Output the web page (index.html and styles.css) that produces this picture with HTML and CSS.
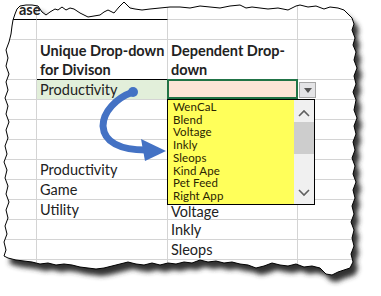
FILE: index.html
```html
<!DOCTYPE html>
<html lang="en">
<head>
  <meta charset="UTF-8" />
  <title>Dependent Drop-down</title>
  <link rel="stylesheet" href="styles.css">
</head>
<body>
  <div class="shot">
    <svg class="backdrop" width="381" height="296">
      <defs>
        <polygon id="tear-shape" points="13,20 15,14 17,9 20,6 26,5 32,5 38,6 42,12 46,15 50,12 55,9 58,10 62,7 66,10 70,8 74,9 80,13 88,17 94,16 100,15 104,12 108,10 114,13 119,7 124,2 127,5 130,8 135,9 142,10 150,9 160,8 170,7 180,7 190,8 200,6 210,7 220,8 230,6 240,5 246,8 252,7 260,8 268,9 278,8 288,10 296,6 300,5 308,7 316,6 324,9 330,7 338,8 344,10 348,14 352,18 354,24 352,30 355,38 353,45 356,52 354,60 357,68 354,76 356,84 353,92 356,100 354,110 357,118 354,126 356,134 353,142 355,150 352,158 355,166 353,174 356,182 353,190 355,198 352,206 354,214 351,222 354,230 352,238 354,246 351,254 353,262 350,268 344,270 338,272 332,275 326,274 320,268 312,266 304,267 296,264 288,266 280,265 272,263 264,266 256,268 248,265 240,264 232,262 224,263 216,261 208,262 200,260 192,263 184,262 176,264 168,263 160,265 152,263 144,265 136,264 128,262 120,264 112,266 104,268 96,269 88,268 80,267 72,265 64,264 56,265 48,263 40,264 32,262 24,261 16,260 8,258 4,256 6,250 4,242 7,234 5,226 8,218 6,210 9,202 6,194 8,186 5,178 7,170 4,162 7,154 5,146 8,138 6,130 9,122 6,114 8,106 5,98 8,90 6,82 9,74 6,66 8,58 6,50 9,42 11,34 12,26"/>
        <clipPath id="tear"><use href="#tear-shape"/></clipPath>
        <filter id="soft" x="-10%" y="-10%" width="120%" height="120%"><feGaussianBlur stdDeviation="2.5"/></filter>
      </defs>
      <use href="#tear-shape" class="shade" transform="translate(5,7)" filter="url(#soft)"/>
    </svg>

    <div class="sheet">
      <div class="grid">
        <div class="cell dark-bottom"><span class="title">ase</span></div>
        <div class="cell dark-bottom"></div>
        <div class="cell"></div>
        <div class="cell"></div>

        <div class="cell"></div><div class="cell"></div><div class="cell"></div><div class="cell"></div>

        <div class="cell"></div>
        <div class="cell head dark-bottom">Unique Drop-down<br>for Divison</div>
        <div class="cell head">Dependent Drop-<br>down</div>
        <div class="cell"></div>

        <div class="cell"></div>
        <div class="cell pick">Productivity</div>
        <div class="cell sel"></div>
        <div class="cell btn-cell"><div class="drop-btn"><svg width="8" height="5" viewBox="0 0 8 5"><path d="M0,0 H8 L4,5 Z" fill="#555"/></svg></div></div>

        <div class="cell"></div><div class="cell"></div><div class="cell"></div><div class="cell"></div>
        <div class="cell"></div><div class="cell"></div><div class="cell"></div><div class="cell"></div>
        <div class="cell"></div><div class="cell"></div><div class="cell"></div><div class="cell"></div>

        <div class="cell"></div><div class="cell">Productivity</div><div class="cell"></div><div class="cell"></div>
        <div class="cell"></div><div class="cell">Game</div><div class="cell"></div><div class="cell"></div>
        <div class="cell"></div><div class="cell">Utility</div><div class="cell low">Voltage</div><div class="cell"></div>
        <div class="cell"></div><div class="cell"></div><div class="cell">Inkly</div><div class="cell"></div>
        <div class="cell"></div><div class="cell"></div><div class="cell">Sleops</div><div class="cell"></div>
        <div class="cell"></div><div class="cell"></div><div class="cell">Kind Ape</div><div class="cell"></div>
      </div>

      <svg class="pointer" width="381" height="296">
        <path d="M133,92 C116,98 103,112 103,126 C104,142 120,150 146,150" fill="none" stroke="#4472c4" stroke-width="7"/>
        <circle cx="133" cy="92" r="5" fill="#4472c4"/>
        <polygon points="141,139 166,151 145,161" fill="#4472c4"/>
      </svg>

      <div class="list">
        <ul class="items">
          <li>WenCaL</li>
          <li>Blend</li>
          <li>Voltage</li>
          <li>Inkly</li>
          <li>Sleops</li>
          <li>Kind Ape</li>
          <li>Pet Feed</li>
          <li>Right App</li>
        </ul>
        <div class="scroll">
          <svg width="12" height="8" viewBox="0 0 12 8"><path d="M1,7 L6,2 L11,7" fill="none" stroke="#606060" stroke-width="1.6"/></svg>
          <div class="thumb"></div>
          <svg class="down" width="12" height="8" viewBox="0 0 12 8"><path d="M1,1 L6,6 L11,1" fill="none" stroke="#606060" stroke-width="1.6"/></svg>
        </div>
      </div>
    </div>

    <svg class="outline" width="381" height="296"><use href="#tear-shape"/></svg>
  </div>
</body>
</html>
```

FILE: styles.css
```css
body {
  margin: 0;
  background: #fff;
  font-family: Lato, "Liberation Sans", sans-serif;
  color: #222;
}
.shot {
  position: relative;
  width: 381px;
  height: 296px;
  overflow: hidden;
}
.backdrop {
  position: absolute;
  left: 0;
  top: 0;
}
.shade {
  fill: #333;
}
.sheet {
  position: relative;
  width: 381px;
  height: 296px;
  background: #fff;
  clip-path: url(#tear);
}
.grid {
  display: grid;
  grid-template-columns: 37px 131px 130px 83px;
  grid-template-rows: 20px 20px 40px repeat(11, 20px);
}
.cell {
  box-sizing: border-box;
  border-right: 1px solid #d4d4d4;
  border-bottom: 1px solid #d4d4d4;
  padding: 0 3px;
  font-size: 14.5px;
  line-height: 19px;
  white-space: nowrap;
}
.low {
  line-height: 15px;
  padding-top: 4px;
}
.dark-bottom {
  border-bottom-color: #000;
}
.title {
  display: inline-block;
  margin-left: 16px;
  font-weight: bold;
  line-height: 20px;
}
.head {
  font-weight: bold;
  line-height: 19px;
  padding-top: 1px;
}
.pick {
  background: #e2efda;
}
.sel {
  position: relative;
  background: #fce4d6;
}
.sel::after {
  content: "";
  position: absolute;
  left: -1px;
  top: -1px;
  right: -1px;
  bottom: 0;
  border: 2px solid #217346;
}
.btn-cell {
  padding: 2px 0 0 1px;
}
.drop-btn {
  box-sizing: border-box;
  width: 17px;
  height: 16px;
  border: 1px solid #a6a6a6;
  background: #e4e4e6;
  display: flex;
  align-items: center;
  justify-content: center;
}
.pointer {
  position: absolute;
  left: 0;
  top: 0;
}
.list {
  position: absolute;
  left: 167px;
  top: 99px;
  width: 148px;
  height: 106px;
  box-sizing: border-box;
  border: 1px solid #000;
  display: flex;
}
.items {
  flex: 1;
  margin: 0;
  padding: 1px 0 0 5px;
  list-style: none;
  background: #ffff5a;
  font-size: 11.5px;
  line-height: 12.7px;
  letter-spacing: 0.1px;
  color: #2a2400;
}
.scroll {
  width: 20px;
  background: #f0f0f0;
  display: flex;
  flex-direction: column;
  align-items: center;
}
.scroll svg {
  margin-top: 9px;
}
.thumb {
  width: 20px;
  height: 32px;
  margin-top: 5px;
  background: #cdcdcd;
}
.scroll .down {
  margin-top: auto;
  margin-bottom: 7px;
}
.outline {
  position: absolute;
  left: 0;
  top: 0;
  fill: none;
  stroke: #000;
  stroke-width: 1;
}
```
